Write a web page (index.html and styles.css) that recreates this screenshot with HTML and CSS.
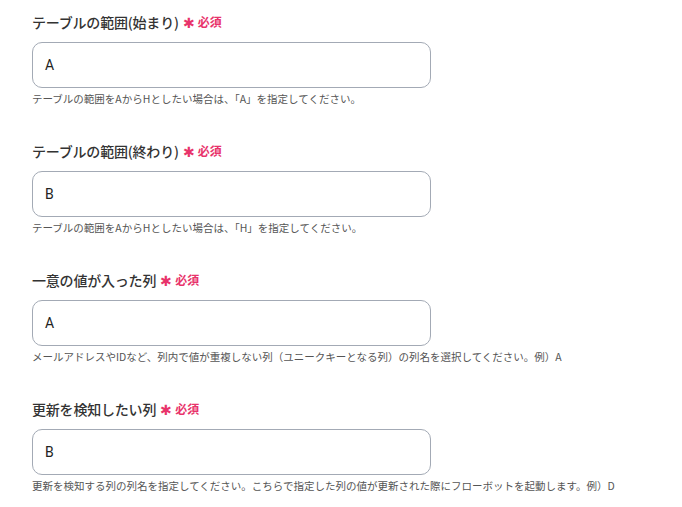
FILE: index.html
```html
<!DOCTYPE html>
<html lang="ja">
<head>
<meta charset="utf-8">
<link rel="stylesheet" href="styles.css">
</head>
<body>
<div class="form">
  <div class="field">
    <div class="label">テーブルの範囲(始まり)<span class="req"><span class="ast">✱</span>必須</span></div>
    <div class="input">A</div>
    <div class="help">テーブルの範囲をAからHとしたい場合は、「A」を指定してください。</div>
  </div>
  <div class="field">
    <div class="label">テーブルの範囲(終わり)<span class="req"><span class="ast">✱</span>必須</span></div>
    <div class="input">B</div>
    <div class="help">テーブルの範囲をAからHとしたい場合は、「H」を指定してください。</div>
  </div>
  <div class="field">
    <div class="label">一意の値が入った列<span class="req"><span class="ast">✱</span>必須</span></div>
    <div class="input">A</div>
    <div class="help">メールアドレスやIDなど、列内で値が重複しない列（ユニークキーとなる列）の列名を選択してください。例）A</div>
  </div>
  <div class="field">
    <div class="label">更新を検知したい列<span class="req"><span class="ast">✱</span>必須</span></div>
    <div class="input">B</div>
    <div class="help">更新を検知する列の列名を指定してください。こちらで指定した列の値が更新された際にフローボットを起動します。例）D</div>
  </div>
</div>
</body>
</html>
```

FILE: styles.css
```css
html, body {
  margin: 0;
  padding: 0;
  background: #ffffff;
}
body {
  font-family: "Noto Sans CJK JP", "Noto Sans", sans-serif;
  color: #333333;
}
.form {
  padding: 12px 0 0 32px;
  display: flex;
  flex-direction: column;
  gap: 34px;
}
.field {
  display: flex;
  flex-direction: column;
}
.label {
  font-size: 14px;
  line-height: 20px;
  font-weight: 500;
  color: #333333;
  display: flex;
  align-items: center;
  letter-spacing: -0.2px;
}
.req {
  color: #e8336b;
  font-size: 12px;
  font-weight: 700;
  margin-left: 4px;
  display: inline-flex;
  align-items: center;
  letter-spacing: 0;
}
.ast {
  font-size: 14px;
  font-weight: 500;
  margin-right: 3px;
}
.input {
  margin-top: 10px;
  width: 399px;
  height: 46px;
  box-sizing: border-box;
  border: 1px solid #a3aab5;
  border-radius: 10px;
  padding: 0 12px;
  display: flex;
  align-items: center;
  font-family: "Roboto", "Noto Sans CJK JP", sans-serif;
  font-size: 14px;
  color: #222222;
}
.help {
  margin-top: 3px;
  font-size: 10.5px;
  line-height: 16px;
  color: #555555;
}
```
